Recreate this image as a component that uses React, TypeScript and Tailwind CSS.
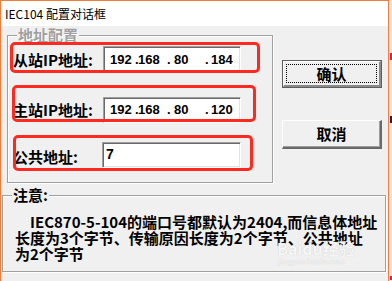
import React from "react";

const F = { fontFamily: '"Noto Sans CJK SC", "Liberation Sans", sans-serif' };

function RedBox({ cls }: { cls: string }) {
  return <div className={"absolute border-[3px] border-[#ff2a1f] rounded-[5px] pointer-events-none " + cls} />;
}

function Sunken({ children, cls }: { children?: React.ReactNode; cls: string }) {
  return (
    <div
      className={
        "bg-white border border-t-[#a0a0a0] border-l-[#a0a0a0] border-b-white border-r-white shadow-[inset_1px_1px_0_#696969,inset_-1px_-1px_0_#e3e3e3] " +
        cls
      }
    >
      {children}
    </div>
  );
}

function Ip({ parts }: { parts: string[] }) {
  return (
    <div
      className="flex items-center h-full pl-[6px] text-[13px] font-bold leading-[16px] text-black"
      style={{ fontFamily: '"Liberation Sans", sans-serif' }}
    >
      <span className="w-[25px]">{parts[0]}</span>
      <span className="w-[3px]">.</span>
      <span className="w-[29px]">{parts[1]}</span>
      <span className="w-[7px]">.</span>
      <span className="w-[31px]">{parts[2]}</span>
      <span className="w-[6px]">.</span>
      <span>{parts[3]}</span>
    </div>
  );
}

export default function App() {
  return (
    <div className="relative w-[392px] h-[281px] bg-[#e4e4e4] overflow-hidden" style={F}>
      <div className="w-[389px] h-[281px] border-l border-t border-r border-[#ef7d3c] flex flex-col">
        <div className="h-[25px] bg-white flex items-center pl-[4px] text-[12px] leading-[14px] text-black shrink-0">
          IEC104 配置对话框
        </div>
        <div className="flex-1 bg-[#f0f0f0] flex flex-col">
          <div className="flex">
            <div className="relative ml-[6px] mt-[9px] w-[266px] h-[148px] border border-[#a0a0a0] shadow-[inset_1px_1px_0_#ffffff,1px_1px_0_#ffffff]">
              <div className="absolute left-[9px] top-[-9px] px-[1px] bg-[#f0f0f0] text-[15px] leading-[16px] font-bold text-[#a0a0a0] [text-shadow:1px_1px_0_#ffffff]">
                地址配置
              </div>
              <div className="flex flex-col pl-[5px] pt-[10px]">
                <div className="flex items-center h-[27px]">
                  <span className="w-[90px] text-[15px] font-bold leading-[16px] text-black whitespace-nowrap">从站IP地址:</span>
                  <Sunken cls="w-[138px] h-[27px]">
                    <Ip parts={["192", "168", "80", "184"]} />
                  </Sunken>
                </div>
                <div className="flex items-center h-[26px] mt-[24px]">
                  <span className="w-[90px] text-[15px] font-bold leading-[16px] text-black whitespace-nowrap">主站IP地址:</span>
                  <Sunken cls="w-[138px] h-[26px]">
                    <Ip parts={["192", "168", "80", "120"]} />
                  </Sunken>
                </div>
                <div className="flex items-center h-[26px] mt-[19px]">
                  <span className="w-[89px] text-[15px] font-bold leading-[16px] text-black whitespace-nowrap pt-[3px]">公共地址:</span>
                  <Sunken cls="w-[139px] h-[26px]">
                    <div className="pl-[3px] pt-[3px] text-[14px] font-bold leading-[16px] text-black" style={{ fontFamily: '"Liberation Sans", sans-serif' }}>
                      7
                    </div>
                  </Sunken>
                </div>
              </div>
            </div>
            <div className="ml-[9px] mt-[34px] flex flex-col">
              <div className="w-[100px] h-[28px] border border-[#5f5f5f] bg-[#f0f0f0]">
                <div className="w-full h-full border-t border-l border-white border-b-2 border-r-2 border-b-[#8a8a8a] border-r-[#8a8a8a] p-[2px]">
                  <div className="w-full h-full border border-dotted border-black flex items-center justify-center text-[15px] font-bold leading-[16px] text-black">
                    确认
                  </div>
                </div>
              </div>
              <div className="mt-[32px] w-[100px] h-[29px] bg-[#f0f0f0] border-t border-l border-white border-b-2 border-r-2 border-b-[#696969] border-r-[#696969] shadow-[inset_-1px_-1px_0_#a0a0a0] flex items-center justify-center text-[15px] font-bold leading-[16px] text-black">
                取消
              </div>
            </div>
          </div>
          <div className="relative ml-[1px] mt-[12px] w-[384px] h-[77px] border border-[#a0a0a0] shadow-[inset_1px_1px_0_#ffffff,1px_1px_0_#ffffff]">
            <div className="absolute left-[9px] top-[-9px] px-[1px] bg-[#f0f0f0] text-[15px] leading-[16px] font-bold text-black">
              注意:
            </div>
            <div className="pl-[12px] pt-[18px] text-[15px] font-bold leading-[16px] text-black whitespace-nowrap">
              <div className="pl-[15px]">IEC870-5-104的端口号都默认为2404,而信息体地址</div>
              <div>长度为3个字节、传输原因长度为2个字节、公共地址</div>
              <div>为2个字节</div>
            </div>
          </div>
        </div>
      </div>

      <RedBox cls="left-[10px] top-[42px] w-[250px] h-[31px]" />
      <RedBox cls="left-[12px] top-[85px] w-[244px] h-[37px]" />
      <RedBox cls="left-[13px] top-[135px] w-[240px] h-[36px]" />

      <div className="absolute left-[277px] top-[240px] text-[16px] font-bold leading-[16px] text-[#f6f6f6] [text-shadow:0_0_1px_#c4c4c4] pointer-events-none">
        Baidu经验
      </div>
      <div className="absolute left-[278px] top-[256px] text-[9px] leading-[10px] text-[#f6f6f6] [text-shadow:0_0_1px_#c4c4c4] pointer-events-none" style={{ fontFamily: '"Liberation Serif", serif' }}>
        jingyan.baidu.com
      </div>

      <div className="absolute left-[390px] top-[53px] w-[2px] h-[7px] bg-[#d0206a]" />
      <div className="absolute left-[390px] top-[116px] w-[2px] h-[7px] bg-[#202060]" />
      <div className="absolute left-[390px] top-[276px] w-[2px] h-[4px] bg-[#d0206a]" />
    </div>
  );
}
